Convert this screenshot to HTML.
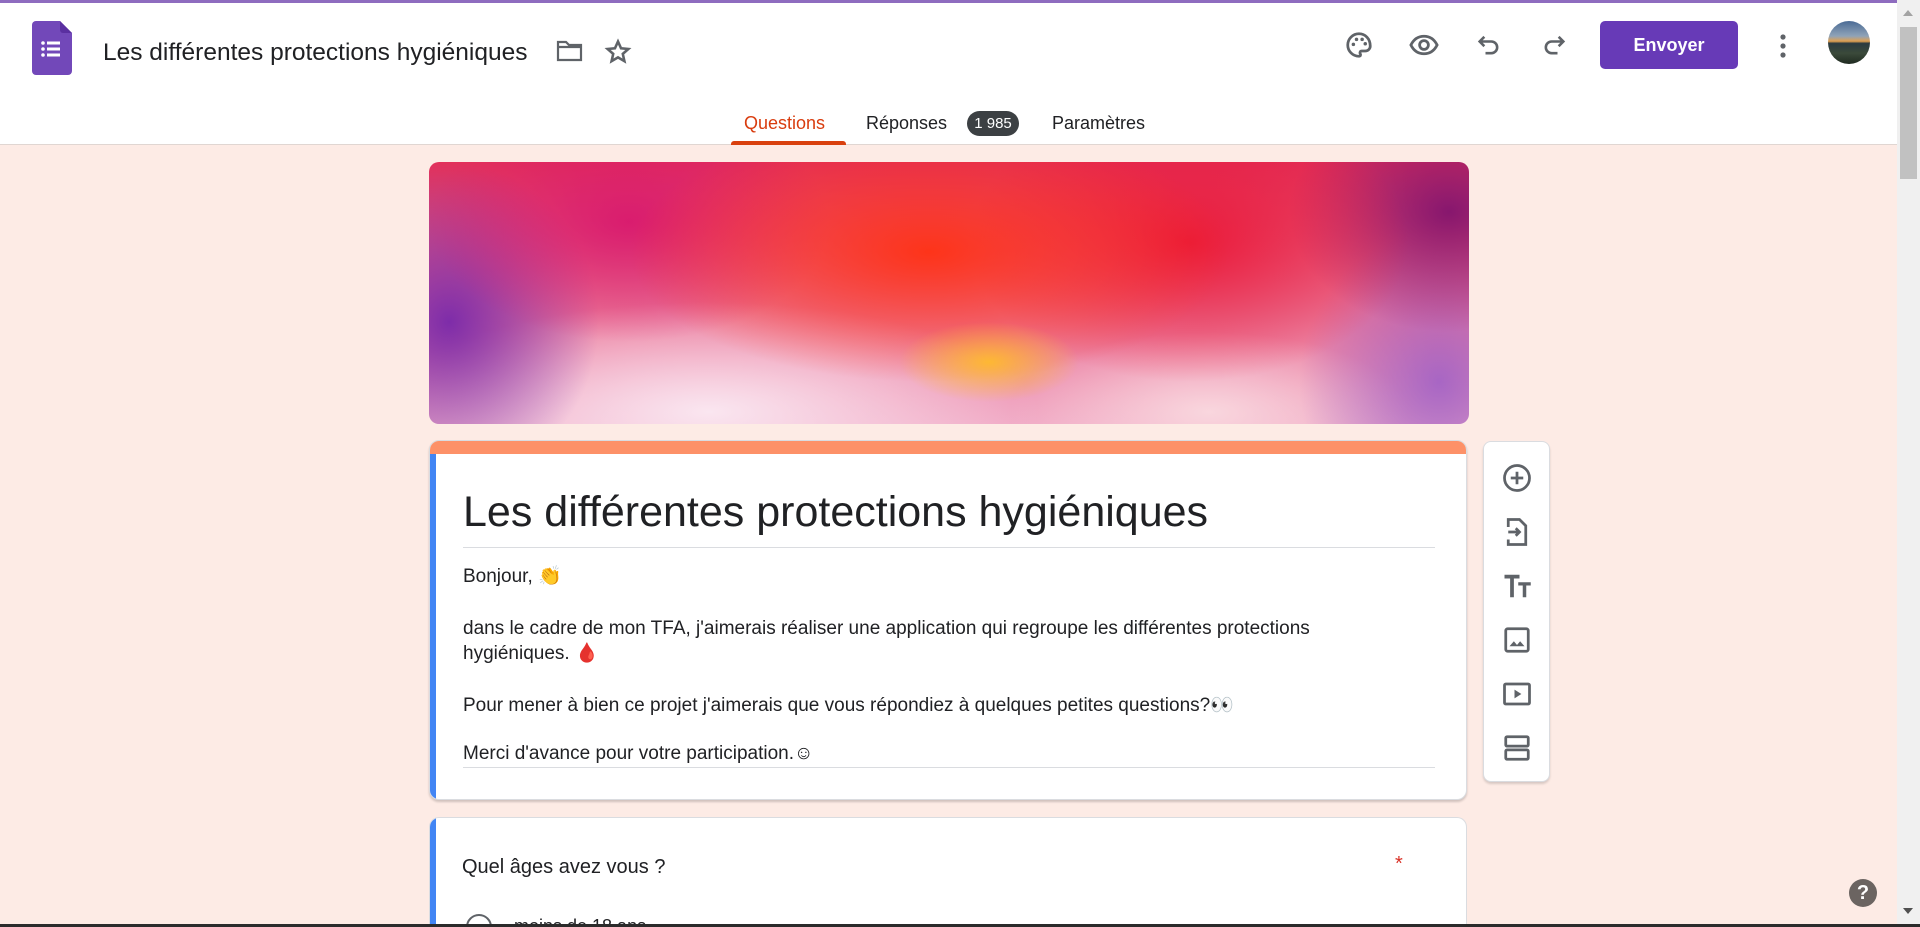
<!DOCTYPE html>
<html style="height:927px;overflow:hidden"><head><meta charset="utf-8">
<style>
*{box-sizing:border-box;margin:0;padding:0}
body{width:1920px;height:927px;overflow:hidden;background:#fdebe5;font-family:"Liberation Sans",Arial,sans-serif;position:relative;color:#202124}
.top{position:absolute;left:0;top:0;width:1897px;height:145px;background:#fff;border-top:3px solid #8e6cbf;border-bottom:1px solid #e0d6d2}
.ab{position:absolute}
.ttl{left:103px;top:36px;font-size:24.5px;color:#202124}
.ic{stroke:#5f6368;fill:none;stroke-width:2.2}
.btn{left:1600px;top:18px;width:138px;height:48px;background:#673ab7;border-radius:5px;color:#fff;font-size:18px;font-weight:bold;text-align:center;line-height:48px}
.tab{top:110px;font-size:18px;color:#202124}
.scroll{position:absolute;right:0;top:0;width:23px;height:927px;background:#f0f0f0}
.card{position:absolute;left:429px;width:1038px;background:#fff;border-radius:10px;border:1px solid #dadce0;overflow:hidden}
.banner{left:429px;top:162px;width:1040px;height:262px;border-radius:10px;overflow:hidden;
background:
radial-gradient(ellipse 90px 40px at 560px 200px,rgba(255,190,40,.9),transparent),
radial-gradient(ellipse 300px 130px at 500px 90px,rgba(255,50,20,.95),transparent),
radial-gradient(ellipse 220px 140px at 760px 80px,rgba(235,20,50,.9),transparent),
radial-gradient(ellipse 200px 120px at 200px 60px,rgba(215,20,110,.85),transparent),
radial-gradient(ellipse 150px 160px at 20px 160px,rgba(120,40,170,.95),transparent),
radial-gradient(ellipse 160px 120px at 1020px 50px,rgba(130,20,110,.95),transparent),
radial-gradient(ellipse 140px 150px at 1010px 220px,rgba(150,90,200,.8),transparent),
radial-gradient(ellipse 330px 110px at 280px 250px,rgba(250,230,240,1),transparent),
radial-gradient(ellipse 200px 80px at 780px 250px,rgba(250,220,225,.9),transparent),
linear-gradient(180deg,#e2305a,#f0a8c4);}
.desc{font-size:19px;color:#202124;position:absolute;left:33px}
</style></head><body>
<div class="top">
 <svg class="ab" style="left:32px;top:18px" width="40" height="54" viewBox="0 0 40 54"><path d="M4 0h24l12 12v38a4 4 0 0 1-4 4H4a4 4 0 0 1-4-4V4a4 4 0 0 1 4-4z" fill="#7248b9"/><path d="M28 0l12 12H31a3 3 0 0 1-3-3z" fill="#5a2fa0"/><g fill="#fff"><circle cx="11" cy="22" r="1.8"/><circle cx="11" cy="28" r="1.8"/><circle cx="11" cy="34" r="1.8"/><rect x="15" y="20.5" width="13" height="3"/><rect x="15" y="26.5" width="13" height="3"/><rect x="15" y="32.5" width="13" height="3"/></g></svg>
 <div class="ab ttl">Les différentes protections hygiéniques</div>
 <svg class="ab" style="left:556px;top:36px" width="28" height="24" viewBox="0 0 28 24"><path class="ic" d="M2 3h8l3 3h12v15H2z"/><path class="ic" d="M2 8h23"/></svg>
 <svg class="ab" style="left:604px;top:35px" width="28" height="28" viewBox="0 0 24 24"><path class="ic" stroke-width="1.8" d="M12 3l2.6 5.8 6.3.6-4.8 4.2 1.4 6.2L12 16.6 6.5 19.8l1.4-6.2L3.1 9.4l6.3-.6z"/></svg>
 <svg class="ab" style="left:1344px;top:27px" width="30" height="30" viewBox="0 0 24 24"><path class="ic" stroke-width="2" d="M12 3a9 9 0 0 0 0 18c1.2 0 1.6-1 1-2-.6-1 0-2.2 1.2-2.2H17a4 4 0 0 0 4-4C21 7 17 3 12 3z"/><g fill="#5f6368"><circle cx="7.5" cy="11.5" r="1.4"/><circle cx="10" cy="7.5" r="1.4"/><circle cx="14.5" cy="7.5" r="1.4"/><circle cx="17" cy="11" r="1.4"/></g></svg>
 <svg class="ab" style="left:1408px;top:27px" width="32" height="30" viewBox="0 0 24 24"><path class="ic" stroke-width="2" d="M1.5 12C4 7 8 5 12 5s8 2 10.5 7C20 17 16 19 12 19s-8-2-10.5-7z"/><circle class="ic" stroke-width="2" cx="12" cy="12" r="3.5"/></svg>
 <svg class="ab" style="left:1475px;top:28px" width="28" height="28" viewBox="0 0 24 24"><path class="ic" stroke-width="2" d="M8 5L4 9l4 4M4 9h10a5 5 0 0 1 0 10H9"/></svg>
 <svg class="ab" style="left:1540px;top:28px" width="28" height="28" viewBox="0 0 24 24"><path class="ic" stroke-width="2" d="M16 5l4 4-4 4M20 9H10a5 5 0 0 0 0 10h5"/></svg>
 <div class="ab btn">Envoyer</div>
 <svg class="ab" style="left:1778px;top:30px" width="10" height="26" viewBox="0 0 10 26"><g fill="#5f6368"><circle cx="5" cy="4" r="2.6"/><circle cx="5" cy="13" r="2.6"/><circle cx="5" cy="22" r="2.6"/></g></svg>
 <div class="ab" style="left:1828px;top:18px;width:42px;height:43px;border-radius:50%;background:linear-gradient(180deg,#4a6b95 0%,#8fa3b8 35%,#e0a050 47%,#2b3a40 52%,#3b4a3a 75%,#1f2a20 100%)"></div>
 <div class="ab tab" style="left:744px;color:#d93c0e">Questions</div>
 <div class="ab" style="left:731px;top:138px;width:115px;height:4px;background:#d9400e;border-radius:3px 3px 0 0"></div>
 <div class="ab tab" style="left:866px">Réponses</div>
 <div class="ab" style="left:967px;top:108px;width:52px;height:25px;border-radius:13px;background:#3c4043;color:#fff;font-size:15px;text-align:center;line-height:25px">1 985</div>
 <div class="ab tab" style="left:1052px">Paramètres</div>
</div>
<div class="scroll"><div style="position:absolute;left:3px;top:27px;width:17px;height:152px;background:#c1c1c1"></div>
<div style="position:absolute;left:6px;top:10px;border:5px solid transparent;border-bottom:6px solid #a3a3a3;border-top:0"></div>
<div style="position:absolute;left:6px;top:908px;border:5px solid transparent;border-top:6px solid #505050;border-bottom:0"></div></div>
<div class="ab banner"></div>
<div class="card" style="top:440px;height:360px;box-shadow:0 2px 2px rgba(0,0,0,.18)">
 <div class="ab" style="left:0;top:0;width:100%;height:13px;background:#fd9168"></div>
 <div class="ab" style="left:0;top:13px;width:6px;height:350px;background:#4285f4"></div>
 <div class="ab" style="left:33px;top:47px;font-size:43px;color:#202124">Les différentes protections hygiéniques</div>
 <div class="ab" style="left:33px;top:106px;width:972px;height:1px;background:#dadce0"></div>
 <div class="desc" style="top:123px">Bonjour, 👏</div>
 <div class="desc" style="top:175px;line-height:25px">dans le cadre de mon TFA, j'aimerais réaliser une application qui regroupe les différentes protections<br>hygiéniques. 🩸</div>
 <div class="desc" style="top:252px">Pour mener à bien ce projet j'aimerais que vous répondiez à quelques petites questions?👀</div>
 <div class="desc" style="top:302px">Merci d'avance pour votre participation.☺</div>
 <div class="ab" style="left:33px;top:326px;width:972px;height:1px;background:#dadce0"></div>
</div>
<div class="ab" style="left:1483px;top:441px;width:67px;height:341px;background:#fff;border-radius:8px;border:1px solid #dadce0;box-shadow:0 2px 2px rgba(0,0,0,.15)">
 <svg class="ab" style="left:18px;top:21px" width="30" height="30" viewBox="0 0 24 24"><circle class="ic" cx="12" cy="12" r="10"/><path class="ic" d="M12 7v10M7 12h10"/></svg>
 <svg class="ab" style="left:18px;top:75px" width="30" height="30" viewBox="0 0 24 24"><path class="ic" d="M5 8V2h9l5 5v15H5v-4M5 12h9M11 9l3 3-3 3"/></svg>
 <svg class="ab" style="left:18px;top:129px" width="30" height="30" viewBox="0 0 24 24"><path fill="#5f6368" d="M2 3h12v3H9.5v15h-3V6H2zM13 9h10v2.6h-3.6V21h-2.8v-9.4H13z"/></svg>
 <svg class="ab" style="left:18px;top:183px" width="30" height="30" viewBox="0 0 24 24"><rect class="ic" x="3" y="3" width="18" height="18" rx="1.5"/><path fill="#5f6368" d="M6 17l3.5-4 2.5 3 2.5-3 3.5 4z"/></svg>
 <svg class="ab" style="left:18px;top:237px" width="30" height="30" viewBox="0 0 24 24"><rect class="ic" x="2" y="4" width="20" height="16" rx="1"/><path fill="#5f6368" d="M10 8.5v7l5.5-3.5z"/></svg>
 <svg class="ab" style="left:18px;top:291px" width="30" height="30" viewBox="0 0 24 24"><rect class="ic" x="3" y="3" width="18" height="7.5" rx="1"/><rect class="ic" x="3" y="13.5" width="18" height="7.5" rx="1"/></svg>
</div>
<div class="card" style="top:817px;height:110px;border-bottom:0;border-radius:10px 10px 0 0">
 <div class="ab" style="left:0;top:0;width:6px;height:110px;background:#4285f4"></div>
 <div class="ab" style="left:32px;top:38px;font-size:20px">Quel âges avez vous ?</div>
 <div class="ab" style="left:965px;top:35px;font-size:20px;color:#d93025">*</div>
 <div class="ab" style="left:36px;top:96px;width:26px;height:26px;border-radius:50%;border:2px solid #5f6368"></div>
 <div class="ab" style="left:84px;top:98px;font-size:18px">moins de 18 ans</div>
</div>
<div class="ab" style="left:1849px;top:879px;width:28px;height:28px;border-radius:50%;background:#6b6461;color:#fff;font-weight:bold;font-size:20px;text-align:center;line-height:28px">?</div>
<div class="ab" style="left:0;top:924px;width:1920px;height:3px;background:#2b2b2b"></div>
</body></html>
